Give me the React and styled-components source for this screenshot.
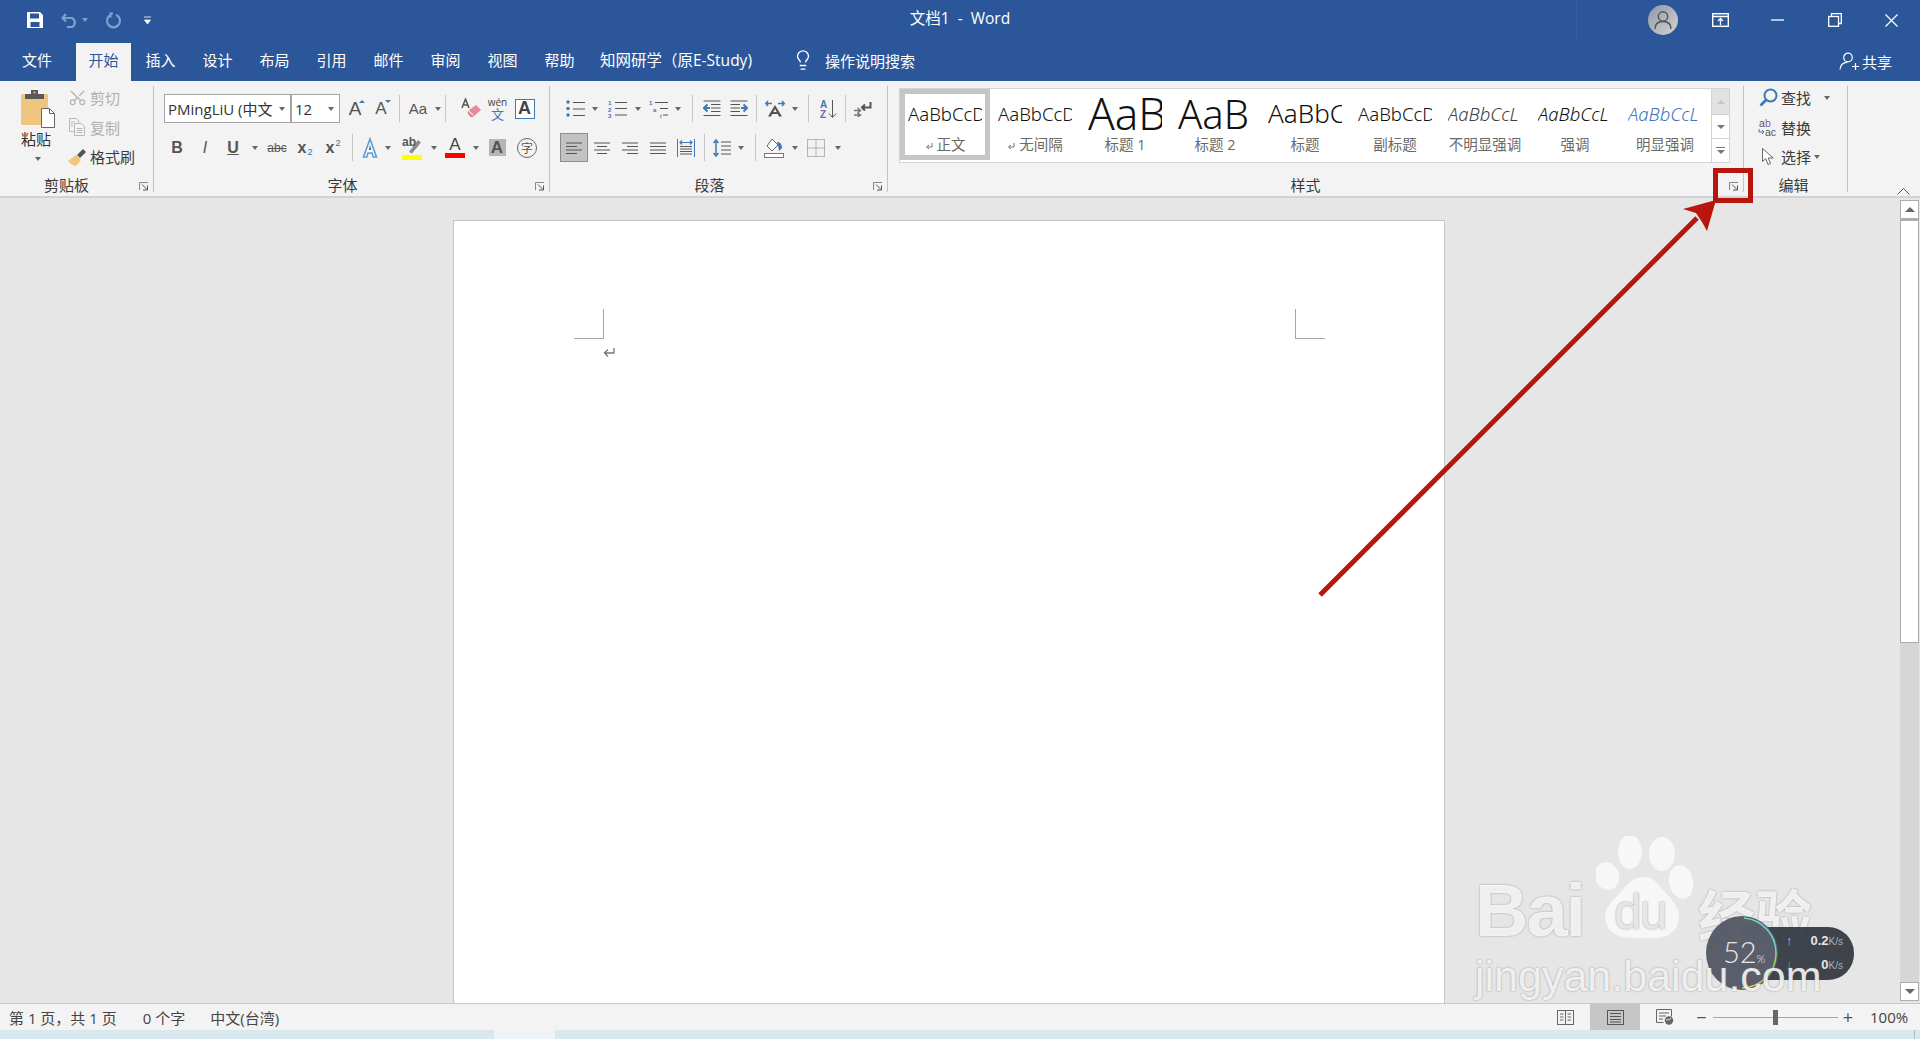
import styled, { createGlobalStyle } from "styled-components";
import { Lightbulb, Scissors } from "lucide-react";

const UI = `"Open Sans", "Noto Sans CJK SC", sans-serif`;

const GlobalStyle = createGlobalStyle`
  html, body { margin: 0; height: 100%; overflow: hidden; background: #e6e6e6; }
  #root { height: 100%; }
  * { box-sizing: border-box; }
`;

const Shell = styled.div`
  position: relative;
  display: flex;
  flex-direction: column;
  height: 100vh;
  overflow: hidden;
  font-family: ${UI};
  color: #444;
`;

/* title bar */
const TitleBar = styled.header`
  display: grid;
  grid-template-columns: 1fr auto 1fr;
  align-items: center;
  height: 40px;
  background: #2b579a;
  color: #fff;
`;
const QuickBar = styled.div`
  display: flex;
  align-items: center;
  padding-left: 27px;
`;
const QuickIcon = styled.span`
  display: flex;
  margin-right: ${(p) => p.$mr || 0}px;
`;
const DocTitle = styled.div`
  font-size: 15.5px;
  white-space: pre;
  padding-bottom: 5px;
`;
const WindowBar = styled.div`
  display: flex;
  align-items: center;
  justify-content: flex-end;
  height: 40px;
`;
const FaintLine = styled.span`
  width: 1px;
  height: 40px;
  margin-right: 71px;
  background: rgba(255, 255, 255, 0.05);
`;
const Avatar = styled.span`
  display: flex;
  align-items: center;
  justify-content: center;
  width: 30px;
  height: 30px;
  margin-right: 14px;
  border-radius: 50%;
  background: linear-gradient(135deg, #8f98a6, #d4d4d4);
`;
const WinButton = styled.span`
  display: flex;
  align-items: center;
  justify-content: center;
  width: 57px;
`;

/* tabs */
const TabBar = styled.nav`
  display: flex;
  align-items: flex-end;
  height: 41px;
  padding-top: 3px;
  background: #2b579a;
  color: #fff;
  font-size: 15px;
`;
const Tab = styled.div`
  display: flex;
  align-items: center;
  justify-content: center;
  width: 55px;
  height: 38px;
  margin-right: 2px;
  padding-bottom: 5px;
  ${(p) => p.$active && `background: #f3f3f3; color: #2b579a;`}
`;
const FileTab = styled(Tab)`
  justify-content: flex-start;
  width: 76px;
  margin-right: 0;
  padding-left: 22px;
`;
const AddinTab = styled(Tab)`
  width: auto;
  padding-left: 11px;
  margin-right: 40px;
  font-size: 15.5px;
  white-space: nowrap;
`;
const SearchHint = styled.div`
  display: flex;
  align-items: center;
  gap: 11px;
  height: 38px;
  padding-bottom: 4px;
  font-size: 15px;
`;
const ShareButton = styled.div`
  display: flex;
  align-items: center;
  gap: 3px;
  height: 38px;
  margin-left: auto;
  padding-right: 28px;
  padding-bottom: 2px;
`;

/* ribbon */
const Ribbon = styled.section`
  display: flex;
  height: 117px;
  padding-top: 5px;
  background: #f3f3f3;
  border-bottom: 2px solid #d2d2d2;
`;
const Group = styled.div`
  display: flex;
  flex-direction: column;
  flex: none;
  width: ${(p) => p.$w}px;
  height: 106px;
  border-right: 1px solid #c4c4c4;
`;
const GroupBody = styled.div`
  flex: 1;
  display: flex;
  flex-direction: column;
  padding: ${(p) => p.$pad || "8px 0 0 10px"};
  gap: ${(p) => p.$gap ?? 10}px;
`;
const GroupFoot = styled.div`
  display: flex;
  align-items: center;
  flex: none;
  height: 21px;
  margin-top: ${(p) => p.$auto ? "auto" : 0};
  margin-bottom: -3px;
  padding-right: 4px;
`;
const GroupLabel = styled.div`
  flex: 1;
  text-align: center;
  font-size: 15px;
  line-height: 20px;
  color: #3a3a3a;
  padding-right: ${(p) => p.$pr || 0}px;
`;
const LauncherSlot = styled.span`
  display: flex;
  padding-top: 4px;
`;
const ToolRow = styled.div`
  display: flex;
  align-items: center;
  height: 29px;
`;
const Cell = styled.span`
  position: relative;
  display: flex;
  align-items: center;
  justify-content: center;
  flex: none;
  width: ${(p) => p.$w}px;
  height: 29px;
  font-family: "Liberation Sans", sans-serif;
  font-size: ${(p) => p.$fs || 16}px;
  font-weight: ${(p) => p.$fw || 700};
  font-style: ${(p) => p.$it ? "italic" : "normal"};
  color: ${(p) => p.$c || "#555"};
  text-decoration: ${(p) => p.$deco || "none"};
  ${(p) => p.$active && `background: #c3c3c3; border: 1px solid #8c8c8c;`}
`;
const Sub = styled.span`
  font-size: 9px;
  font-weight: 400;
  color: #2f6fb0;
  align-self: ${(p) => p.$top ? "flex-start" : "flex-end"};
  margin: ${(p) => p.$top ? "5px 0 0 1px" : "0 0 5px 1px"};
`;
const Caret = styled.span`
  flex: none;
  width: 0;
  height: 0;
  margin-left: ${(p) => p.$ml || 0}px;
  border-left: 3.5px solid transparent;
  border-right: 3.5px solid transparent;
  border-top: 4px solid ${(p) => p.$c || "#666"};
`;
const Divider = styled.span`
  flex: none;
  width: 1px;
  height: 27px;
  margin-left: ${(p) => p.$l}px;
  margin-right: ${(p) => p.$r}px;
  background: #c6c6c6;
`;
const Combo = styled.div`
  display: flex;
  align-items: center;
  justify-content: space-between;
  flex: none;
  width: ${(p) => p.$w}px;
  height: 29px;
  padding: 0 5px 0 3px;
  margin-right: ${(p) => p.$mr || 0}px;
  background: #fff;
  border: 1px solid #a4a4a4;
  font-size: 15px;
  color: #333;
  white-space: nowrap;
  overflow: hidden;
`;
const ShadedA = styled.span`
  display: flex;
  align-items: center;
  justify-content: center;
  width: 17px;
  height: 17px;
  background: #b6b6b6;
  font-size: 17px;
  color: #555;
`;
const BoxedA = styled.span`
  display: flex;
  align-items: center;
  justify-content: center;
  width: 20px;
  height: 20px;
  background: #fff;
  border: 1px solid #3f78b2;
  font-size: 18px;
  color: #444;
`;
const ColorA = styled.span`
  display: flex;
  flex-direction: column;
  align-items: center;
  width: 20px;
  font-size: 17px;
  line-height: 16px;
  font-weight: 400;
  color: #444;
  &::after {
    content: "";
    width: 20px;
    height: 5px;
    background: ${(p) => p.$bar};
  }
`;
const CircleChar = styled.span`
  display: flex;
  align-items: center;
  justify-content: center;
  width: 20px;
  height: 20px;
  border: 1px solid #666;
  border-radius: 50%;
  font-family: ${UI};
  font-size: 12px;
  font-weight: 400;
  color: #555;
`;
const WenStack = styled.span`
  display: flex;
  flex-direction: column;
  align-items: center;
  font-family: ${UI};
  font-weight: 400;
  line-height: 11px;
  font-size: 10px;
  color: #444;
  & b { font-weight: 400; font-size: 13px; color: #3f78b2; line-height: 13px; }
`;
const GrowTip = styled.span`
  position: absolute;
  top: 6px;
  right: 3px;
  width: 0;
  height: 0;
  border-left: 3px solid transparent;
  border-right: 3px solid transparent;
  ${(p) => p.$down ? `border-top: 3px solid #3f78b2;` : `border-bottom: 3px solid #3f78b2;`}
`;

/* clipboard + editing */
const ClipboardBody = styled.div`
  flex: 1;
  display: flex;
  min-height: 0;
`;
const PasteColumn = styled.div`
  display: flex;
  flex-direction: column;
  align-items: center;
  width: 50px;
  margin-left: 13px;
  padding-top: 4px;
  font-size: 15px;
  color: #333;
  line-height: 20px;
`;
const PasteLabel = styled.span`
  margin-top: 1px;
  margin-right: 4px;
  margin-bottom: 8px;
`;
const SmallColumn = styled.div`
  display: flex;
  flex-direction: column;
  margin-top: -3px;
  margin-left: ${(p) => p.$ml || 4}px;
`;
const SmallRow = styled.div`
  display: flex;
  align-items: center;
  height: 29.5px;
  font-size: 15px;
  color: ${(p) => p.$muted ? "#b0b0b0" : "#3a3a3a"};
  white-space: nowrap;
`;
const SmallIcon = styled.span`
  display: flex;
  justify-content: center;
  width: 20px;
  margin-right: 3px;
`;

/* style gallery */
const Gallery = styled.div`
  display: flex;
  flex: none;
  width: 831px;
  height: 75px;
  margin: 2px 0 0 11px;
  background: #fff;
  border: 1px solid #d4d4d4;
`;
const StyleCard = styled.div`
  display: flex;
  flex-direction: column;
  align-items: center;
  flex: none;
  width: 90px;
  height: 71px;
  padding-top: ${(p) => p.$selected ? 0 : 5}px;
  ${(p) => p.$selected && `border: 5px solid #c6c6c6;`}
`;
const Sample = styled.div`
  display: flex;
  align-items: center;
  width: 74px;
  height: 38px;
  overflow: hidden;
  white-space: nowrap;
  font-family: "Noto Sans", sans-serif;
  font-weight: 300;
  font-size: ${(p) => p.$size || 18.5}px;
  font-style: ${(p) => p.$italic ? "italic" : "normal"};
  color: ${(p) => p.$color || "#111"};
`;
const StyleName = styled.div`
  margin-top: 4px;
  font-size: 14.5px;
  line-height: 18px;
  color: #6a6a6a;
  white-space: pre;
`;
const GalleryScroll = styled.div`
  display: flex;
  flex-direction: column;
  width: 18px;
  margin-left: auto;
`;
const ScrollStep = styled.div`
  display: flex;
  flex-direction: column;
  align-items: center;
  justify-content: center;
  gap: 2px;
  height: ${(p) => p.$h}px;
  background: ${(p) => p.$off ? "#e2e2e2" : "#fff"};
  border-left: 1px solid #d4d4d4;
  border-bottom: 1px solid #d4d4d4;
  &:last-child { border-bottom: 0; }
`;
const UpTip = styled.span`
  width: 0;
  height: 0;
  border-left: ${(p) => p.$s || 4}px solid transparent;
  border-right: ${(p) => p.$s || 4}px solid transparent;
  border-bottom: ${(p) => p.$s || 4}px solid ${(p) => p.$c || "#c4c4c4"};
`;
const DownTip = styled.span`
  width: 0;
  height: 0;
  border-left: ${(p) => p.$s || 4}px solid transparent;
  border-right: ${(p) => p.$s || 4}px solid transparent;
  border-top: ${(p) => p.$s || 4}px solid ${(p) => p.$c || "#777"};
`;
const Bar = styled.span`
  width: 9px;
  height: 1px;
  background: #777;
`;
const RibbonEnd = styled.div`
  flex: 1;
  display: flex;
  align-items: flex-end;
  justify-content: flex-end;
  padding: 0 10px 1px 0;
`;

/* document */
const Workspace = styled.main`
  flex: 1;
  display: flex;
  min-height: 0;
  background: #e6e6e6;
`;
const PageArea = styled.div`
  flex: 1;
  padding: 22px 0 0 453px;
  overflow: hidden;
`;
const Page = styled.div`
  width: 992px;
  height: 800px;
  padding: 88px 119px 0 120px;
  background: #fff;
  border: 1px solid #c6c6c6;
  border-width: 1px 1px 0 1px;
`;
const CropRow = styled.div`
  display: flex;
  justify-content: space-between;
`;
const CropMark = styled.span`
  width: 30px;
  height: 30px;
  border-bottom: 1px solid #a8a8a8;
  ${(p) => p.$right ? `border-left: 1px solid #a8a8a8;` : `border-right: 1px solid #a8a8a8;`}
`;
const ParaMark = styled.div`
  margin: 9px 0 0 29px;
  line-height: 0;
`;
const ScrollTrack = styled.aside`
  display: flex;
  flex-direction: column;
  flex: none;
  width: 20px;
  padding-top: 2px;
  background: #e6e6e6;
`;
const ScrollArrow = styled.div`
  display: flex;
  align-items: center;
  justify-content: center;
  flex: none;
  height: 19px;
  width: 19px;
  background: #fff;
  border: 1px solid #adadad;
`;
const ScrollThumb = styled.div`
  flex: none;
  width: 19px;
  height: 424px;
  background: #fff;
  border: 1px solid #adadad;
  border-top-width: 2px;
`;
const ScrollRest = styled.div`
  flex: 1;
  width: 19px;
  background: #d6d6d6;
`;
const ScrollFoot = styled.div`
  flex: none;
  height: 2px;
`;

/* status bar */
const StatusBar = styled.footer`
  display: flex;
  align-items: center;
  height: 27px;
  background: #f3f3f3;
  border-top: 1px solid #c8c8c8;
  font-size: 15px;
  color: #444;
`;
const StatusText = styled.span`
  margin-left: ${(p) => p.$ml}px;
  white-space: pre;
`;
const StatusRight = styled.div`
  display: flex;
  align-items: center;
  height: 100%;
  margin-left: auto;
`;
const ViewButton = styled.span`
  display: flex;
  align-items: center;
  justify-content: center;
  width: 50px;
  height: 100%;
  ${(p) => p.$active && `background: #c6c6c6;`}
`;
const ZoomStep = styled.span`
  display: flex;
  align-items: center;
  justify-content: center;
  width: ${(p) => p.$w}px;
  font-size: 18px;
  line-height: 1;
  color: #555;
`;
const ZoomSlider = styled.span`
  position: relative;
  width: 125px;
  height: 1px;
  background: #a8a8a8;
`;
const ZoomThumb = styled.span`
  position: absolute;
  left: 60px;
  top: -7px;
  width: 5px;
  height: 15px;
  background: #666;
`;
const ZoomValue = styled.span`
  width: 62px;
  padding-left: 12px;
`;
const DesktopStrip = styled.div`
  display: flex;
  flex: none;
  height: 9px;
  background: #d9e7f0;
  overflow: hidden;
`;
const LightPatch = styled.span`
  width: 61px;
  margin-left: 494px;
  background: #eef3f7;
`;
const ClockPeek = styled.span`
  margin-left: auto;
  margin-right: 84px;
  font-size: 15px;
  line-height: 20px;
  margin-top: 4px;
  color: #111;
`;
const EdgeLine = styled.span`
  width: 1px;
  margin-right: 5px;
  background: #aebcc6;
`;

/* things lying over the page */
const Callout = styled.div`
  position: absolute;
  left: 1713px;
  top: 168px;
  width: 40px;
  height: 35px;
  border: 5px solid #b8160d;
`;
const ArrowLayer = styled.svg`
  position: absolute;
  left: 0;
  top: 0;
  pointer-events: none;
`;
const NetWidget = styled.div`
  position: absolute;
  z-index: 1;
  left: 1706px;
  top: 916px;
  display: flex;
  align-items: center;
  color: #e8e8e8;
  opacity: 0.9;
`;
const NetDial = styled.div`
  position: relative;
  z-index: 1;
  display: flex;
  align-items: baseline;
  justify-content: center;
  width: 72px;
  height: 74px;
  padding: 21px 0 0 4px;
  border-radius: 50%;
  background: #4b505e;
  font-family: "Lato", sans-serif;
  font-weight: 300;
  font-size: 29px;
  line-height: 1;
  & small { font-size: 11px; }
`;
const NetRing = styled.svg`
  position: absolute;
  left: 0;
  top: 0;
`;
const NetPill = styled.div`
  display: flex;
  flex-direction: column;
  justify-content: center;
  gap: 9px;
  width: 112px;
  height: 53px;
  margin-left: -36px;
  padding: 0 11px 0 44px;
  border-radius: 0 26px 26px 0;
  background: #2d323c;
  font-family: "Liberation Sans", sans-serif;
  font-size: 13px;
  font-weight: 700;
`;
const NetRow = styled.div`
  display: flex;
  align-items: baseline;
  justify-content: space-between;
  line-height: 14px;
  color: ${(p) => p.$c};
  & span { color: #e8e8e8; }
  & small { font-size: 10px; font-weight: 400; color: #a6a9b0; }
`;
const Watermark = styled.div`
  position: absolute;
  left: 1473px;
  top: 836px;
  width: 350px;
  height: 165px;
  color: rgba(255, 255, 255, 0.85);
  font-family: "Liberation Sans", "Noto Sans CJK SC", sans-serif;
  pointer-events: none;
  text-shadow: 0 0 2px rgba(110, 110, 110, 0.7);
`;
const BrandRow = styled.div`
  display: flex;
  align-items: flex-end;
  height: 106px;
`;
const BrandBai = styled.span`
  margin-left: 2px;
  margin-bottom: -6px;
  font-size: 74px;
  font-weight: 700;
  line-height: 74px;
  letter-spacing: -2px;
  width: 121px;
`;
const PawWrap = styled.span`
  position: relative;
  display: block;
  width: 100px;
  height: 106px;
`;
const PawText = styled.span`
  position: absolute;
  left: 18px;
  bottom: 5px;
  font-size: 50px;
  font-weight: 400;
  line-height: 50px;
  letter-spacing: -2px;
  color: #e6e6e6;
`;
const BrandJing = styled.span`
  font-family: "Noto Sans CJK SC", sans-serif;
  margin-left: 2px;
  margin-bottom: -2px;
  font-size: 57px;
  font-weight: 700;
  line-height: 62px;
`;
const BrandUrl = styled.div`
  position: relative;
  z-index: 2;
  margin-top: 10px;
  margin-left: 2px;
  font-size: 43px;
  line-height: 48px;
  white-space: nowrap;
`;

/* icons */
const Svg = ({ w, h, children, flip }) => (
  <svg width={w} height={h} viewBox={`0 0 ${w} ${h}`} fill="none" style={flip ? { transform: "scaleX(-1)" } : undefined}>
    {children}
  </svg>
);

const SaveIcon = () => (
  <Svg w={16} h={16}>
    <path fillRule="evenodd" d="M0 0h13l3 3v13H0zM3 1.500v5h9v-5zM3.500 10v5h9v-5z" fill="#fff" />
  </Svg>
);
const UndoIcon = () => (
  <Svg w={19} h={16}>
    <path d="M5 2 1.500 6 5 9.500M2 6h9a5 5 0 0 1 0 9H6" stroke="#7ea0cc" strokeWidth="2.200" />
  </Svg>
);
const RedoIcon = () => (
  <Svg w={17} h={17}>
    <path d="M8 1.500H5.500v4M6 2.800a6.500 6.500 0 1 0 5 0" stroke="#7ea0cc" strokeWidth="2.200" />
  </Svg>
);
const QuickMore = () => (
  <Svg w={7} h={9}>
    <path d="M0 1h7M.5 4h6L3.500 8z" stroke="#fff" fill="#fff" strokeWidth=".8" />
  </Svg>
);
const PersonIcon = () => (
  <Svg w={18} h={20}>
    <circle cx="9" cy="6.500" r="4.700" stroke="#555" strokeWidth="1.500" />
    <path d="M1 19c0-5 3-7.500 8-7.500s8 2.500 8 7.500" stroke="#555" strokeWidth="1.500" />
  </Svg>
);
const RibbonModeIcon = () => (
  <Svg w={17} h={14}>
    <rect x=".7" y=".7" width="15.600" height="12.600" stroke="#fff" strokeWidth="1.400" />
    <path d="M1 3.500h15M8.500 12V6M6 8l2.500-2.500L11 8" stroke="#fff" strokeWidth="1.300" />
  </Svg>
);
const MinimizeIcon = () => <Svg w={13} h={2}><path d="M0 1h13" stroke="#fff" strokeWidth="1.300" /></Svg>;
const RestoreIcon = () => (
  <Svg w={14} h={14}>
    <path d="M3.500 3V.7h9.800v9.800H10.500" stroke="#fff" strokeWidth="1.300" />
    <rect x=".7" y="3.500" width="9.800" height="9.800" stroke="#fff" strokeWidth="1.300" />
  </Svg>
);
const CloseIcon = () => <Svg w={13} h={13}><path d="m.5.5 12 12M12.500.5l-12 12" stroke="#fff" strokeWidth="1.300" /></Svg>;
const ShareIcon = () => (
  <Svg w={20} h={18}>
    <circle cx="9" cy="5.500" r="4.300" stroke="#fff" strokeWidth="1.200" />
    <path d="M1 17.500c.3-4 3-7 7.500-7.400M13 14.500h7M16.500 11v7" stroke="#fff" strokeWidth="1.200" />
  </Svg>
);
const PasteIcon = () => (
  <Svg w={34} h={38}>
    <rect y="4" width="27" height="31" rx="1" fill="#efc67f" />
    <path d="M4 4h19v5H4zM10 0h7v4h-7z" fill="#5a5a5a" />
    <circle cx="13.500" cy="2.500" r="1" fill="#efc67f" />
    <path d="M20.500 18.500h8l5 5v14h-13z" fill="#fff" stroke="#666" />
    <path d="M28.500 18.500v5h5" stroke="#666" />
  </Svg>
);
const CopyIcon = () => (
  <Svg w={18} h={18}>
    <path d="M1.500 .5h7l2 2v11h-9z" fill="#f3f3f3" stroke="#b8b8b8" />
    <path d="M6.500 5.500h7l3 3v9h-10z" fill="#f3f3f3" stroke="#b8b8b8" />
    <path d="M8.500 10.500h6M8.500 12.500h6M8.500 14.500h6M3 4h4M3 6h2M3 8h2" stroke="#b8b8b8" />
  </Svg>
);
const PainterIcon = () => (
  <Svg w={20} h={18}>
    <path d="M1 13 9 7l5 5-5 6c-2-.5-6-2-8-5z" fill="#efc67f" />
    <path d="m10 7 6-6 3 3-6 6z" fill="#555" />
  </Svg>
);
const EraserIcon = () => (
  <Svg w={22} h={22}>
    <path d="m9 12 7-5 5 5-8 7c-2 1-3 0-5-3-1-2 0-3 1-4z" fill="#e98a9c" />
    <path d="m8 12 5 5" stroke="#fff" />
    <path d="M2 10 5.500 1 9 10M3.200 7h4.500" stroke="#555" strokeWidth="1.500" />
  </Svg>
);
const TextEffectIcon = () => (
  <Svg w={20} h={22}>
    <path d="M10 2 3.500 20h3.200l1.300-4h4l1.300 4h3.200z" fill="#fff" stroke="#5b9bd5" strokeWidth="1.600" />
    <path d="M10 7.500 8.700 13h2.600z" fill="#3f78b2" />
  </Svg>
);
const HighlightIcon = () => (
  <Svg w={20} h={24}>
    <rect y="19" width="20" height="5" fill="#ffff00" />
    <path d="m7 16 9-12 3 2.500-9 11z" fill="#8a8a8a" />
    <text x="0" y="10" fontSize="12" fill="#555" fontFamily="Liberation Sans">ab</text>
  </Svg>
);
const Lines = ({ w = 20, h = 16, rows, color = "#555" }) => (
  <Svg w={w} h={h}>
    {rows.map(([x1, x2, y], i) => <path key={i} d={`M${x1} ${y}H${x2}`} stroke={color} />)}
  </Svg>
);
const BulletIcon = () => (
  <Svg w={19} h={17}>
    {[2, 8.500, 15].map((y) => <circle key={y} cx="2" cy={y} r="1.700" fill="#3f78b2" />)}
    {[2, 8.500, 15].map((y) => <path key={y} d={`M7 ${y + 0.5}h12`} stroke="#555" />)}
  </Svg>
);
const NumberIcon = () => (
  <Svg w={19} h={18}>
    {["1", "2", "3"].map((n, i) => <text key={n} x="0" y={5 + i * 6.500} fontSize="6" fontWeight="700" fill="#3f78b2" fontFamily="Liberation Sans">{n}</text>)}
    {[2.500, 8.500, 15].map((y) => <path key={y} d={`M7 ${y}h12`} stroke="#555" />)}
  </Svg>
);
const MultiIcon = () => (
  <Svg w={19} h={18}>
    <text x="0" y="5" fontSize="6" fontWeight="700" fill="#3f78b2" fontFamily="Liberation Sans">1</text>
    <text x="4" y="11.500" fontSize="6" fontWeight="700" fill="#3f78b2" fontFamily="Liberation Sans">a</text>
    <text x="11" y="17.500" fontSize="6" fontWeight="700" fill="#3f78b2" fontFamily="Liberation Sans">i</text>
    <path d="M6 2.500h13M11 8.500h8M14 15h5" stroke="#555" />
  </Svg>
);
const OutdentIcon = ({ flip }) => (
  <Svg w={18} h={17} flip={flip}>
    <path d="M.5 1h17M8 4.500h9.500M8 8h9.500M8 11.500h9.500M.5 15.500h17" stroke="#555" />
    <path d="M7 8H1.500M4.500 4.500 1 8l3.500 3.500" stroke="#3f78b2" strokeWidth="2" />
  </Svg>
);
const AsianLayoutIcon = () => (
  <Svg w={20} h={17}>
    <path d="M1 3.500h6M3 1 .8 3.500 3 6M19 3.500h-6M17 1l2.200 2.500L17 6" stroke="#3f78b2" strokeWidth="1.500" />
    <path d="M10 5 3 16.500h3l1.300-2.500h5.400l1.300 2.500h3zM8.300 12 10 9l1.700 3z" fill="#555" />
  </Svg>
);
const SortIcon = () => (
  <Svg w={17} h={20}>
    <text x="0" y="9" fontSize="10" fontWeight="700" fill="#3f78b2" fontFamily="Liberation Sans">A</text>
    <text x="0" y="19" fontSize="10" fontWeight="700" fill="#8e5aa8" fontFamily="Liberation Sans">Z</text>
    <path d="M12.500 1v17M9 14.500l3.500 4 3.500-4" stroke="#555" />
  </Svg>
);
const ShowMarksIcon = () => (
  <Svg w={18} h={16}>
    <path d="M16.500 1v5.500H8M11 3.500 8 6.500l3 3" stroke="#555" strokeWidth="2" />
    <path d="M0 9.500h6M3.500 7l3 2.500-3 2.500M0 14h6M3.500 12l3 2-3 2" stroke="#777" strokeWidth="1.500" />
  </Svg>
);
const DistributeIcon = () => (
  <Svg w={18} h={18}>
    <path d="M.5 0v18M17.500 0v18" stroke="#3f78b2" />
    <path d="M3 3.500h12M5 1.500 3 3.500l2 2M13 1.500l2 2-2 2" stroke="#3f78b2" strokeWidth="1.200" />
    <path d="M3 7.500h12M3 10h12M3 12.500h12M3 15h12" stroke="#555" />
  </Svg>
);
const SpacingIcon = () => (
  <Svg w={18} h={18}>
    <path d="M3 1v16M.5 4 3 1l2.500 3M.5 14 3 17l2.500-3" stroke="#3f78b2" strokeWidth="1.500" />
    <path d="M8 3h10M8 7h10M8 11h10M8 15h10" stroke="#555" />
  </Svg>
);
const ShadingIcon = () => (
  <Svg w={20} h={20}>
    <rect x=".5" y="15.500" width="19" height="4" stroke="#777" fill="#fff" />
    <path d="m8 1 6 6-6 6-5-5z" stroke="#666" fill="#fff" />
    <path d="M13 4c3 0 5 2 5 6l-3 3-1-6z" fill="#3f78b2" />
  </Svg>
);
const BorderIcon = () => (
  <Svg w={18} h={18}>
    <rect x=".5" y=".5" width="17" height="17" stroke="#777" strokeDasharray="1 1" />
    <path d="M9 .5v17M.5 9h17" stroke="#777" strokeDasharray="1 1" />
  </Svg>
);
const SearchIcon = () => (
  <Svg w={19} h={19}>
    <circle cx="11.500" cy="7.500" r="6" stroke="#3f78b2" strokeWidth="2" />
    <path d="M7 12 1.500 17.500" stroke="#3f78b2" strokeWidth="2.600" />
  </Svg>
);
const ReplaceIcon = () => (
  <Svg w={20} h={19}>
    <text x="1" y="9" fontSize="10.500" fill="#555" fontFamily="Liberation Sans">a</text>
    <text x="7" y="9" fontSize="10.500" fill="#8e5aa8" fontFamily="Liberation Sans">b</text>
    <text x="7" y="18" fontSize="10.500" fill="#555" fontFamily="Liberation Sans">ac</text>
    <path d="M1 11v3h5M4 12l2 2-2 2" stroke="#3f78b2" />
  </Svg>
);
const PointerIcon = () => (
  <Svg w={12} h={18}>
    <path d="M.5.5v13l3.200-3 2.300 6 2.500-1-2.300-5.500h5z" fill="#fff" stroke="#666" />
  </Svg>
);
const LauncherIcon = () => (
  <LauncherSlot>
    <Svg w={10} h={9}>
      <path d="M.5 8V.5H9" stroke="#888" />
      <path d="M3 2.500 8 7.500M8.500 3.500v4.500H4" stroke="#555" />
    </Svg>
  </LauncherSlot>
);
const ChevronUp = () => <Svg w={13} h={7}><path d="m.5 6.500 6-6 6 6" stroke="#555" /></Svg>;
const ReturnMark = () => (
  <Svg w={12} h={10}>
    <path d="M11 0v5H2M5 1.500 1.500 5 5 8.500" stroke="#777" strokeWidth="1.300" />
  </Svg>
);
const SmallReturn = () => (
  <Svg w={8} h={8}>
    <path d="M7 1v4H2M4 3 1.500 5 4 7" stroke="#777" />
  </Svg>
);
const ReadIcon = () => (
  <Svg w={17} h={15}>
    <rect x=".5" y=".5" width="16" height="14" stroke="#666" />
    <path d="M8.500 .5v14M3 4h3.500M3 7h3.500M3 10h3.500M10.500 4H14M10.500 7H14M10.500 10H14" stroke="#666" />
  </Svg>
);
const PrintIcon = () => (
  <Svg w={17} h={15}>
    <rect x=".5" y=".5" width="16" height="14" stroke="#555" />
    <path d="M3 3.500h11M3 6.500h11M3 9.500h11M3 12h11" stroke="#555" />
  </Svg>
);
const WebIcon = () => (
  <Svg w={18} h={16}>
    <path d="M.5.5h15v7M.5.5v13h7" stroke="#666" />
    <path d="M3 4h10M3 7h7M3 10h4" stroke="#666" />
    <circle cx="13" cy="11.500" r="4.200" fill="#666" />
    <path d="M10 11c2-1 3 1 5-2" stroke="#fff" />
  </Svg>
);
const ScissorGlyph = styled(Scissors)`
  transform: rotate(-90deg);
`;

const alignRows = {
  left: [[1, 17, 3], [1, 12, 6.500], [1, 17, 10], [1, 12, 13.500]],
  center: [[1, 17, 3], [4, 14, 6.500], [1, 17, 10], [4, 14, 13.500]],
  right: [[1, 17, 3], [6, 17, 6.500], [1, 17, 10], [6, 17, 13.500]],
  justify: [[1, 17, 3], [1, 17, 6.500], [1, 17, 10], [1, 17, 13.500]],
};

const styleCards = [
  { text: "AaBbCcD", name: "正文", mark: true, selected: true },
  { text: "AaBbCcD", name: "无间隔", mark: true },
  { text: "AaBb", name: "标题 1", size: 44 },
  { text: "AaBl", name: "标题 2", size: 40 },
  { text: "AaBbC", name: "标题", size: 26 },
  { text: "AaBbCcD", name: "副标题" },
  { text: "AaBbCcL", name: "不明显强调", italic: true, color: "#404040" },
  { text: "AaBbCcL", name: "强调", italic: true },
  { text: "AaBbCcL", name: "明显强调", italic: true, color: "#4472c4" },
];

const tabs = ["插入", "设计", "布局", "引用", "邮件", "审阅", "视图", "帮助"];

const App = () => {
  return (
    <>
      <GlobalStyle />
      <Shell>
        <TitleBar>
          <QuickBar>
            <QuickIcon $mr={18}><SaveIcon /></QuickIcon>
            <QuickIcon $mr={2}><UndoIcon /></QuickIcon>
            <QuickIcon $mr={17}><Caret $c="#7ea0cc" /></QuickIcon>
            <QuickIcon $mr={22}><RedoIcon /></QuickIcon>
            <QuickIcon><QuickMore /></QuickIcon>
          </QuickBar>
          <DocTitle>文档1  -  Word</DocTitle>
          <WindowBar>
            <FaintLine />
            <Avatar><PersonIcon /></Avatar>
            <WinButton><RibbonModeIcon /></WinButton>
            <WinButton><MinimizeIcon /></WinButton>
            <WinButton><RestoreIcon /></WinButton>
            <WinButton><CloseIcon /></WinButton>
          </WindowBar>
        </TitleBar>

        <TabBar>
          <FileTab>文件</FileTab>
          <Tab $active>开始</Tab>
          {tabs.map((t) => <Tab key={t}>{t}</Tab>)}
          <AddinTab>知网研学（原E-Study)</AddinTab>
          <SearchHint><Lightbulb size={22} strokeWidth={1.500} />操作说明搜索</SearchHint>
          <ShareButton><ShareIcon />共享</ShareButton>
        </TabBar>

        <Ribbon>
          <Group $w={154}>
            <ClipboardBody>
              <PasteColumn>
                <PasteIcon />
                <PasteLabel>粘贴</PasteLabel>
                <Caret />
              </PasteColumn>
              <SmallColumn>
                <SmallRow $muted><SmallIcon><ScissorGlyph size={19} color="#b6b6b6" strokeWidth={1.700} /></SmallIcon>剪切</SmallRow>
                <SmallRow $muted><SmallIcon><CopyIcon /></SmallIcon>复制</SmallRow>
                <SmallRow><SmallIcon><PainterIcon /></SmallIcon>格式刷</SmallRow>
              </SmallColumn>
            </ClipboardBody>
            <GroupFoot>
              <GroupLabel $pr={6}>剪贴板</GroupLabel>
              <LauncherIcon />
            </GroupFoot>
          </Group>

          <Group $w={396}>
            <GroupBody>
              <ToolRow>
                <Combo $w={127}>PMingLiU (中文<Caret /></Combo>
                <Combo $w={49} $mr={2}>12<Caret /></Combo>
                <Cell $w={26} $fw={400} $fs={19}>A<GrowTip /></Cell>
                <Cell $w={26} $fw={400} $fs={17}>A<GrowTip $down /></Cell>
                <Divider $l={5} $r={4} />
                <Cell $w={28} $fw={400} $fs={15}>Aa</Cell>
                <Cell $w={12}><Caret /></Cell>
                <Divider $l={1} $r={12} />
                <Cell $w={26}><EraserIcon /></Cell>
                <Cell $w={27}><WenStack>wén<b>文</b></WenStack></Cell>
                <Cell $w={27}><BoxedA>A</BoxedA></Cell>
              </ToolRow>
              <ToolRow>
                <Cell $w={26}>B</Cell>
                <Cell $w={30} $it $fw={400}>I</Cell>
                <Cell $w={26} $deco="underline">U</Cell>
                <Cell $w={18}><Caret /></Cell>
                <Cell $w={26} $fw={400} $fs={12} $deco="line-through">abc</Cell>
                <Cell $w={30}>x<Sub>2</Sub></Cell>
                <Cell $w={26}>x<Sub $top>2</Sub></Cell>
                <Divider $l={6} $r={5} />
                <Cell $w={24}><TextEffectIcon /></Cell>
                <Cell $w={12}><Caret /></Cell>
                <Cell $w={36}><HighlightIcon /></Cell>
                <Cell $w={8}><Caret /></Cell>
                <Cell $w={34}><ColorA $bar="#ff0000">A</ColorA></Cell>
                <Cell $w={8}><Caret /></Cell>
                <Cell $w={34}><ShadedA>A</ShadedA></Cell>
                <Cell $w={26}><CircleChar>字</CircleChar></Cell>
              </ToolRow>
            </GroupBody>
            <GroupFoot>
              <GroupLabel $pr={4}>字体</GroupLabel>
              <LauncherIcon />
            </GroupFoot>
          </Group>

          <Group $w={338}>
            <GroupBody>
              <ToolRow>
                <Cell $w={30}><BulletIcon /></Cell>
                <Cell $w={10}><Caret /></Cell>
                <Cell $w={34}><NumberIcon /></Cell>
                <Cell $w={8}><Caret /></Cell>
                <Cell $w={32}><MultiIcon /></Cell>
                <Cell $w={8}><Caret /></Cell>
                <Divider $l={10} $r={9} />
                <Cell $w={20}><OutdentIcon /></Cell>
                <Cell $w={34}><OutdentIcon flip /></Cell>
                <Divider $l={0} $r={1} />
                <Cell $w={34}><AsianLayoutIcon /></Cell>
                <Cell $w={6}><Caret /></Cell>
                <Divider $l={10} $r={9} />
                <Cell $w={20}><SortIcon /></Cell>
                <Divider $l={7} $r={6} />
                <Cell $w={22}><ShowMarksIcon /></Cell>
              </ToolRow>
              <ToolRow>
                <Cell $w={28} $active><Lines w={18} rows={alignRows.left} /></Cell>
                <Cell $w={28}><Lines w={18} rows={alignRows.center} /></Cell>
                <Cell $w={28}><Lines w={18} rows={alignRows.right} /></Cell>
                <Cell $w={28}><Lines w={18} rows={alignRows.justify} /></Cell>
                <Cell $w={28}><DistributeIcon /></Cell>
                <Divider $l={4} $r={3} />
                <Cell $w={28}><SpacingIcon /></Cell>
                <Cell $w={10}><Caret /></Cell>
                <Divider $l={9} $r={8} />
                <Cell $w={20}><ShadingIcon /></Cell>
                <Cell $w={22}><Caret /></Cell>
                <Cell $w={20}><BorderIcon /></Cell>
                <Cell $w={24}><Caret /></Cell>
              </ToolRow>
            </GroupBody>
            <GroupFoot>
              <GroupLabel $pr={4}>段落</GroupLabel>
              <LauncherIcon />
            </GroupFoot>
          </Group>

          <Group $w={856}>
            <Gallery>
              {styleCards.map((c) => (
                <StyleCard key={c.name} $selected={c.selected}>
                  <Sample $size={c.size} $italic={c.italic} $color={c.color}>{c.text}</Sample>
                  <StyleName>{c.mark && <SmallReturn />}{c.mark && " "}{c.name}</StyleName>
                </StyleCard>
              ))}
              <GalleryScroll>
                <ScrollStep $h={26} $off><UpTip /></ScrollStep>
                <ScrollStep $h={24}><DownTip /></ScrollStep>
                <ScrollStep $h={23}><Bar /><DownTip /></ScrollStep>
              </GalleryScroll>
            </Gallery>
            <GroupFoot $auto>
              <GroupLabel $pr={6}>样式</GroupLabel>
              <LauncherIcon />
            </GroupFoot>
          </Group>

          <Group $w={104}>
            <ClipboardBody>
              <SmallColumn $ml={14}>
                <SmallRow><SmallIcon><SearchIcon /></SmallIcon>查找<Caret $ml={13} /></SmallRow>
                <SmallRow><SmallIcon><ReplaceIcon /></SmallIcon>替换</SmallRow>
                <SmallRow><SmallIcon><PointerIcon /></SmallIcon>选择<Caret $ml={3} /></SmallRow>
              </SmallColumn>
            </ClipboardBody>
            <GroupFoot>
              <GroupLabel>编辑</GroupLabel>
            </GroupFoot>
          </Group>

          <RibbonEnd><ChevronUp /></RibbonEnd>
        </Ribbon>

        <Workspace>
          <PageArea>
            <Page>
              <CropRow>
                <CropMark />
                <CropMark $right />
              </CropRow>
              <ParaMark><ReturnMark /></ParaMark>
            </Page>
          </PageArea>
          <ScrollTrack>
            <ScrollArrow><UpTip $s={5} $c="#666" /></ScrollArrow>
            <ScrollThumb />
            <ScrollRest />
            <ScrollArrow><DownTip $s={5} $c="#666" /></ScrollArrow>
            <ScrollFoot />
          </ScrollTrack>
        </Workspace>

        <StatusBar>
          <StatusText $ml={9}>第 1 页，共 1 页</StatusText>
          <StatusText $ml={26}>0 个字</StatusText>
          <StatusText $ml={25}>中文(台湾)</StatusText>
          <StatusRight>
            <ViewButton><ReadIcon /></ViewButton>
            <ViewButton $active><PrintIcon /></ViewButton>
            <ViewButton><WebIcon /></ViewButton>
            <ZoomStep $w={23}>−</ZoomStep>
            <ZoomSlider><ZoomThumb /></ZoomSlider>
            <ZoomStep $w={20}>+</ZoomStep>
            <ZoomValue>100%</ZoomValue>
          </StatusRight>
        </StatusBar>
        <DesktopStrip>
          <LightPatch />
          <ClockPeek>10:00</ClockPeek>
          <EdgeLine />
        </DesktopStrip>

        <ArrowLayer width="1920" height="1039" viewBox="0 0 1920 1039">
          <path d="M1320 595 1697 218" stroke="#b8160d" strokeWidth="5" />
          <path d="M1716 200 1683 209 1696 213 1702 222 1707 231z" fill="#b8160d" />
        </ArrowLayer>
        <Callout />

        <Watermark>
          <BrandRow>
            <BrandBai>Bai</BrandBai>
            <PawWrap>
              <svg width="100" height="106" viewBox="0 0 100 106" fill="#f7f7f7">
                <ellipse cx="34" cy="16" rx="12" ry="17" />
                <ellipse cx="66" cy="18" rx="13" ry="17" />
                <ellipse cx="11" cy="40" rx="12" ry="14" transform="rotate(-20 11 40)" />
                <ellipse cx="85" cy="46" rx="12" ry="17" transform="rotate(-12 85 46)" />
                <path d="M48 41c9 0 13 5 18 12 5 6 15 13 17 26 1 13-8 23-23 23H36C20 102 8 93 9 80c1-12 12-19 19-28 6-7 11-11 20-11z" />
              </svg>
              <PawText>du</PawText>
            </PawWrap>
            <BrandJing>经验</BrandJing>
          </BrandRow>
          <BrandUrl>jingyan.baidu.com</BrandUrl>
        </Watermark>

        <NetWidget>
          <NetDial>
            52<small>%</small>
            <NetRing width="72" height="74" viewBox="0 0 72 74" fill="none">
              <path d="M38 2a35 35 0 0 1 32 35" stroke="#5fd9c4" strokeWidth="1.500" />
              <path d="M70 37a35 35 0 0 1-14 28" stroke="#8fd84a" strokeWidth="1.500" />
              <path d="M56 65a35 35 0 0 1-20 7" stroke="#e4d82a" strokeWidth="1.500" />
            </NetRing>
          </NetDial>
          <NetPill>
            <NetRow $c="#7cc4ef">↑<span>0.2<small>K/s</small></span></NetRow>
            <NetRow $c="#2ccf4f">↓<span>0<small>K/s</small></span></NetRow>
          </NetPill>
        </NetWidget>
      </Shell>
    </>
  );
};

export default App;
